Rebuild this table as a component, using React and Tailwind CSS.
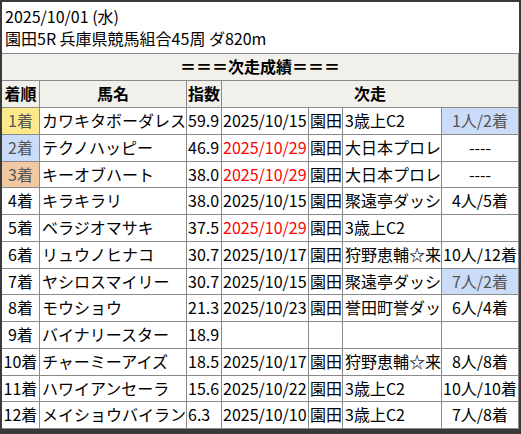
import React from 'react';

const rows = [
  { rank: '1着', rankBg: 'bg-[#fde98c]', name: 'カワキタボーダレス', idx: '59.9', date: '2025/10/15', red: false, place: '園田', race: '3歳上C2', result: '1人/2着', resBg: true },
  { rank: '2着', rankBg: 'bg-[#cadcf8]', name: 'テクノハッピー', idx: '46.9', date: '2025/10/29', red: true, place: '園田', race: '大日本プロレ', result: '----' },
  { rank: '3着', rankBg: 'bg-[#f0c8a2]', name: 'キーオブハート', idx: '38.0', date: '2025/10/29', red: true, place: '園田', race: '大日本プロレ', result: '----' },
  { rank: '4着', name: 'キラキラリ', idx: '38.0', date: '2025/10/15', place: '園田', race: '聚遠亭ダッシ', result: '4人/5着' },
  { rank: '5着', name: 'ベラジオマサキ', idx: '37.5', date: '2025/10/29', red: true, place: '園田', race: '3歳上C2', result: '' },
  { rank: '6着', name: 'リュウノヒナコ', idx: '30.7', date: '2025/10/17', place: '園田', race: '狩野恵輔☆来', result: '10人/12着' },
  { rank: '7着', name: 'ヤシロスマイリー', idx: '30.7', date: '2025/10/15', place: '園田', race: '聚遠亭ダッシ', result: '7人/2着', resBg: true },
  { rank: '8着', name: 'モウショウ', idx: '21.3', date: '2025/10/23', place: '園田', race: '誉田町誉ダッ', result: '6人/4着' },
  { rank: '9着', name: 'バイナリースター', idx: '18.9', date: '', place: '', race: '', result: '' },
  { rank: '10着', name: 'チャーミーアイズ', idx: '18.5', date: '2025/10/17', place: '園田', race: '狩野恵輔☆来', result: '8人/8着' },
  { rank: '11着', name: 'ハワイアンセーラ', idx: '15.6', date: '2025/10/22', place: '園田', race: '3歳上C2', result: '10人/10着' },
  { rank: '12着', name: 'メイショウバイラン', idx: '6.3', date: '2025/10/10', place: '園田', race: '3歳上C2', result: '7人/8着' },
];

const cols = 'grid grid-cols-[38px_147px_35px_87px_34px_99px_77px]';
const cell = 'border-r border-b border-[#8a8a8a] flex items-center overflow-hidden whitespace-nowrap';

export default function App() {
  return (
    <div
      className="w-[521px] h-[434px] bg-[#3a3a3a] border-t-2 border-l-2 border-r-2 border-b-[5px] border-[#3a3a3a] text-[16px] text-black leading-[21.33px]"
      style={{ fontFamily: '"Noto Sans CJK JP", "Noto Sans", sans-serif' }}
    >
      <div className="bg-white h-full">
        <div className="h-[52px] border-b border-[#8a8a8a] pt-[3px] pl-[3px] leading-[22px]">
          <div>2025/10/01 (水)</div>
          <div>園田5R 兵庫県競馬組合45周 ダ820m</div>
        </div>
        <div className="h-[27px] bg-[#f2f0eb] border-b border-r border-[#8a8a8a] flex items-center justify-center font-bold">
          ＝＝＝次走成績＝＝＝
        </div>
        <div className={`${cols} h-[27px] bg-[#f2f0eb] font-bold`}>
          <div className={`${cell} justify-center`}>着順</div>
          <div className={`${cell} justify-center`}>馬名</div>
          <div className={`${cell} justify-center`}>指数</div>
          <div className={`${cell} justify-center col-span-4`}>次走</div>
        </div>
        {rows.map((r) => (
          <div key={r.rank} className={`${cols} h-[26.75px]`}>
            <div className={`${cell} justify-center ${r.rankBg ? `${r.rankBg} text-[#555]` : ''}`}>{r.rank}</div>
            <div className={`${cell} pl-[2px]`}>{r.name}</div>
            <div className={`${cell} pl-[1px]`}>{r.idx}</div>
            <div className={`${cell} pl-[1px] ${r.red ? 'text-[#ff0000]' : ''}`}>{r.date}</div>
            <div className={`${cell} pl-[1px]`}>{r.place}</div>
            <div className={`${cell} pl-[2px]`}>{r.race}</div>
            <div className={`${cell} justify-center ${r.resBg ? 'bg-[#cadcf8] text-[#555]' : ''}`}>{r.result}</div>
          </div>
        ))}
      </div>
    </div>
  );
}
